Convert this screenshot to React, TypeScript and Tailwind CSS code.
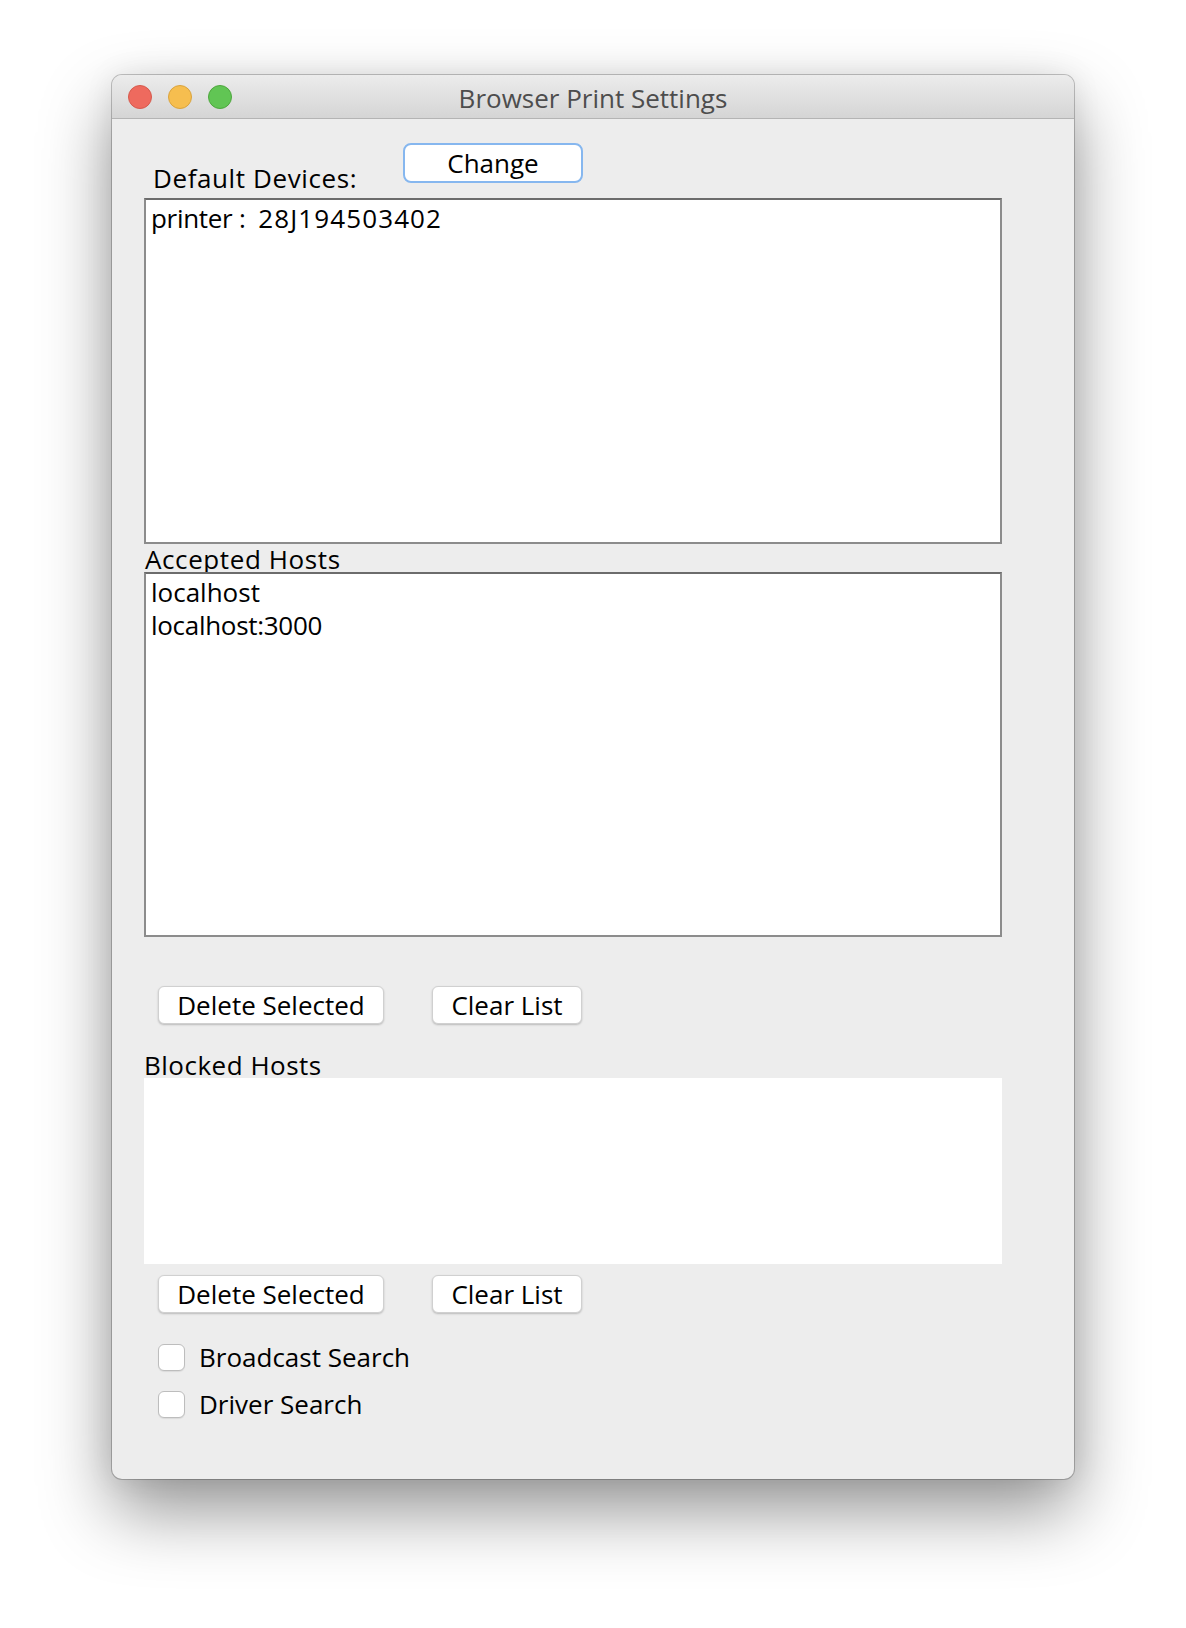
import React from 'react';

const FONT = "font-['Open_Sans','DejaVu_Sans',sans-serif]";

function MacButton({ label, width, focused }: { label: string; width: string; focused?: boolean }) {
  if (focused) {
    return (
      <button className={`${width} h-[40px] rounded-[8px] bg-white border-2 border-[#86b7ef] text-[26px] leading-none text-black`}>
        {label}
      </button>
    );
  }
  return (
    <button className={`${width} h-[38px] rounded-[6px] bg-white border border-[#d0d0d0] shadow-[0_1px_2px_rgba(0,0,0,0.22)] text-[26px] leading-none text-black`}>
      {label}
    </button>
  );
}

function ListBox({ height, children }: { height: string; children: React.ReactNode }) {
  return (
    <div className={`relative z-10 ${height} w-[858px] bg-white border-2 border-[#8c8c8c] border-t-[#6c6c6c] pt-[2px] pl-[5px] text-[26px] leading-[33px] text-black whitespace-pre`}>
      {children}
    </div>
  );
}

function CheckRow({ label }: { label: string }) {
  return (
    <div className="flex items-center h-[27px] ml-[14px]">
      <div className="w-[27px] h-[27px] rounded-[6px] bg-white border border-[#bdbdbd] shadow-[0_1px_1px_rgba(0,0,0,0.08)]" />
      <span className="ml-[14px] text-[26px] leading-[27px] text-black">{label}</span>
    </div>
  );
}

export default function App() {
  return (
    <div className={`w-[1186px] h-[1628px] bg-white pt-[75px] pl-[112px] ${FONT}`}>
      <div className="w-[962px] h-[1404px] rounded-[10px] bg-[#ededed] overflow-hidden shadow-[0_0_0_1px_rgba(0,0,0,0.22),0_32px_70px_rgba(0,0,0,0.42),0_0_30px_rgba(0,0,0,0.08)]">
        {/* title bar */}
        <div className="relative h-[44px] flex items-center justify-center bg-gradient-to-b from-[#ececec] to-[#d5d5d5] border-b border-[#b4b4b4]">
          <div className="absolute left-[16px] top-[10px] flex gap-[16px]">
            <div className="w-[24px] h-[24px] rounded-full bg-[#ee6a5e] border border-[#d55a4d]" />
            <div className="w-[24px] h-[24px] rounded-full bg-[#f6be4f] border border-[#d9a33e]" />
            <div className="w-[24px] h-[24px] rounded-full bg-[#61c554] border border-[#4ea63e]" />
          </div>
          <span className="mt-[2px] text-[26px] leading-none text-[#4d4d4d]">Browser Print Settings</span>
        </div>

        {/* content */}
        <div className="pl-[32px]">
          <div className="flex items-start h-[79px]">
            <span className="ml-[9px] w-[250px] mt-[46px] text-[26px] leading-[26px] tracking-[0.6px] text-black">Default Devices:</span>
            <div className="mt-[24px]">
              <MacButton label="Change" width="w-[180px]" focused />
            </div>
          </div>

          <ListBox height="h-[346px]">
            <div>
              <span className="tracking-[-0.3px]">{'printer :  '}</span>
              <span className="tracking-[1.1px]">28J194503402</span>
            </div>
          </ListBox>

          <div className="h-[28px] ml-[1px] text-[26px] leading-[30px] tracking-[0.6px] text-black">Accepted Hosts</div>

          <ListBox height="h-[365px]">
            <div>localhost</div>
            <div className="tracking-[-0.3px]">localhost:3000</div>
          </ListBox>

          <div className="flex gap-[48px] ml-[14px] mt-[49px]">
            <MacButton label="Delete Selected" width="w-[226px]" />
            <MacButton label="Clear List" width="w-[150px]" />
          </div>

          <div className="h-[28px] mt-[26px] text-[26px] leading-[30px] tracking-[0.5px] text-black">Blocked Hosts</div>
          <div className="relative z-10 h-[186px] w-[858px] bg-white" />

          <div className="flex gap-[48px] ml-[14px] mt-[11px]">
            <MacButton label="Delete Selected" width="w-[226px]" />
            <MacButton label="Clear List" width="w-[150px]" />
          </div>

          <div className="mt-[31px] flex flex-col gap-[20px]">
            <CheckRow label="Broadcast Search" />
            <CheckRow label="Driver Search" />
          </div>
        </div>
      </div>
    </div>
  );
}
